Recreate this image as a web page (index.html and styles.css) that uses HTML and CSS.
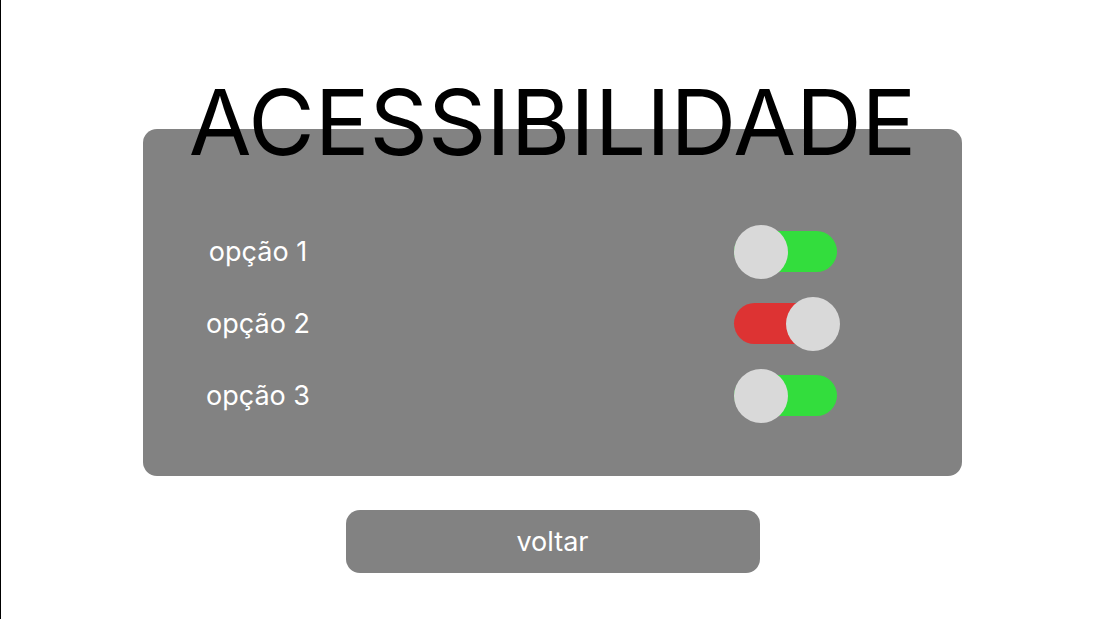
FILE: index.html
```html
<!DOCTYPE html>
<html lang="pt">
<head>
    <meta charset="UTF-8">
    <title>Acessibilidade</title>

    <link rel="stylesheet" href="styles.css">
</head>
<body>

<div class="page">
    <h1 class="title">ACESSIBILIDADE</h1>

    <div class="panel">
        <div class="row">
            <span class="label">opção 1</span>
            <span class="toggle on"><span class="knob"></span></span>
        </div>
        <div class="row">
            <span class="label">opção 2</span>
            <span class="toggle off"><span class="knob"></span></span>
        </div>
        <div class="row">
            <span class="label">opção 3</span>
            <span class="toggle on"><span class="knob"></span></span>
        </div>
    </div>

    <button class="back">voltar</button>
</div>

</body>
</html>
```

FILE: styles.css
```css
* {
    margin: 0;
    padding: 0;
    box-sizing: border-box;
}

body {
    font-family: Inter, "Noto Sans", sans-serif;
    background: #fff;
}

.page {
    display: flex;
    flex-direction: column;
    align-items: center;
    min-height: 100vh;
    padding-top: 77px;
    border-left: 1px solid #000;
}

.title {
    position: relative;
    z-index: 1;
    margin-bottom: -39px;
    font-size: 91px;
    line-height: 91px;
    font-weight: 400;
    color: #000;
}

.panel {
    display: flex;
    flex-direction: column;
    width: 819px;
    height: 347px;
    padding: 86px 125px 0 60px;
    background: #828282;
    border-radius: 14px;
}

.row {
    display: flex;
    justify-content: space-between;
    align-items: center;
    height: 72px;
}

.label {
    width: 110px;
    text-align: center;
    font-size: 27px;
    color: #fff;
}

.toggle {
    position: relative;
    width: 103px;
    height: 41px;
    border-radius: 21px;
}

.toggle.on {
    background: #33dd3d;
}

.toggle.off {
    background: #dd3333;
}

.knob {
    position: absolute;
    top: -6px;
    left: 0;
    width: 54px;
    height: 54px;
    border-radius: 50%;
    background: #d9d9d9;
}

.toggle.off .knob {
    left: 52px;
}

.back {
    width: 414px;
    height: 63px;
    margin-top: 34px;
    border: none;
    border-radius: 14px;
    background: #828282;
    font-family: Inter, "Noto Sans", sans-serif;
    font-size: 27px;
    color: #fff;
}
```
